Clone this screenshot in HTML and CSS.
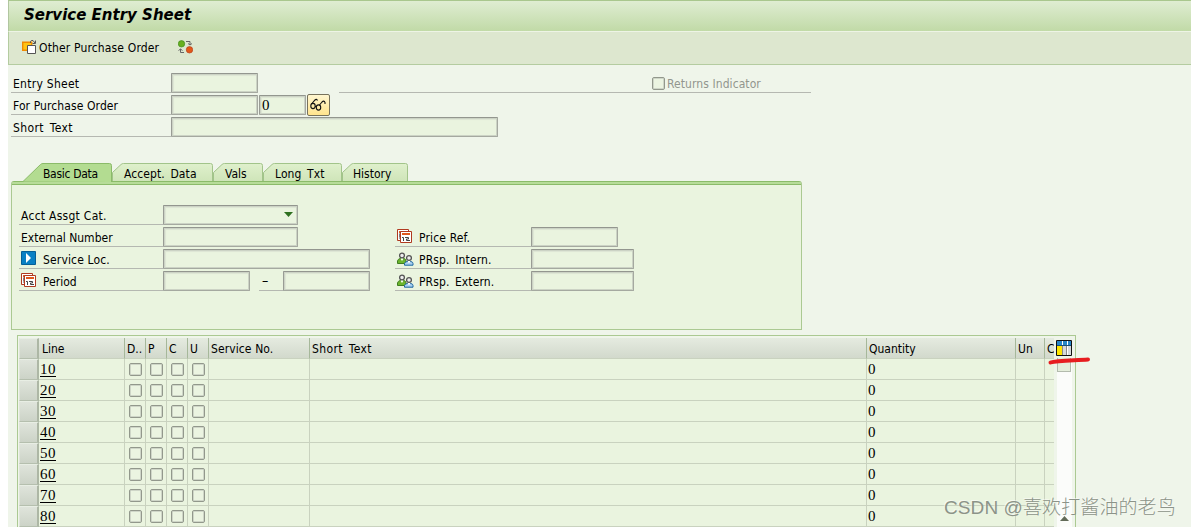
FILE: index.html
```html
<!DOCTYPE html>
<html lang="en">
<head>
<meta charset="utf-8">
<title>Service Entry Sheet</title>
<link rel="stylesheet" href="styles.css">
</head>
<body>
<svg class="defs" width="0" height="0">
  <symbol id="calendar" viewBox="0 0 16 14">
    <path d="M.5.5h11v11H.5z" fill="#fff" stroke="#b03a20"/><path d="M2 2h8v2H2z" fill="#e06020"/><path d="M2 5h1v5M2 7h2" stroke="#555" fill="none"/>
    <path d="M3.500 2.500h11v11h-11z" fill="#fff" stroke="#b03a20"/><path d="M5 4h8v2H5z" fill="#e0581c"/>
    <path d="M5 8.500h1.500V12M8 8.500h3.500v1.500H9.500V11.500H13" stroke="#444" fill="none"/>
  </symbol>
  <symbol id="people" viewBox="0 0 17 14">
    <path d="M.5 11.500V9Q1 7 3 6.500h4Q9 7 9 9v2.500z" fill="#6cb52d" stroke="#3f7d20"/>
    <circle cx="5" cy="3.500" r="2.400" fill="#eee" stroke="#555" stroke-width="1.300"/><path d="M3.500 6.500l1.500 2.500L6.500 6.500" fill="#fff"/>
    <path d="M7.500 13.200V11.500Q8 10 10 9.500h4Q16 10 16 11.500v1.700z" fill="#a9d0f0" stroke="#1c66a0"/>
    <circle cx="12" cy="6" r="2.400" fill="#eee" stroke="#555" stroke-width="1.300"/><path d="M10.500 9l1.500 2.500 1.500-2.500" fill="#fff"/>
  </symbol>
</svg>
<main class="app">
  <header class="titlebar"><h1>Service Entry Sheet</h1></header>
  <nav class="toolbar">
    <svg class="ic-order" width="15" height="16" viewBox="0 0 15 16"><path d="M.7 3.200h9v8.100H.7z" fill="#ffc414" stroke="#f08a00" stroke-width="1.400"/><path d="M5.500 6.500h8v8h-8z" fill="#fff" stroke="#555"/><path d="M8.500 4V2.500Q9 1 11 1.500l2 2.500M13.500 1.500v3H10.500" fill="none" stroke="#555"/></svg>
    <span class="t-order">Other Purchase Order</span>
    <svg class="ic-switch" width="15" height="14" viewBox="0 0 15 14"><circle cx="3.500" cy="3.800" r="3.200" fill="#68b01e" stroke="#438c20" stroke-width=".7"/><circle cx="11.500" cy="9.800" r="3.200" fill="#e2581a" stroke="#b8401a" stroke-width=".7"/><path d="M8 1.500h4V5M10 3.500l2 1.500 2-1.500M6 12.500H2.500V9M.5 10.500l2-1.500 2 1.500" fill="none" stroke="#666"/></svg>
  </nav>

  <section class="head-form">
    <div class="row"><label class="lab"><span class="t-entry">Entry Sheet</span></label><i class="field w87"></i>
      <div class="returns"><i class="check"></i><span class="t-returns">Returns Indicator</span></div></div>
    <div class="row"><label class="lab"><span class="t-for">For Purchase Order</span></label><i class="field w87"></i><i class="field w47 num">0</i>
      <button class="glasses"><svg width="18" height="14" viewBox="0 0 18 14"><path d="M2.500 6L6 2Q7.500.5 8.500 2.500M10.500 7L13 4Q15 2 16 4.500V6M6 8.500h1.500" fill="none" stroke="#111" stroke-width="1.100"/><ellipse cx="4" cy="8" rx="2.200" ry="2.600" fill="none" stroke="#111" stroke-width="1.100"/><ellipse cx="9.500" cy="9.500" rx="2.200" ry="2.600" fill="none" stroke="#111" stroke-width="1.100"/></svg></button></div>
    <div class="row"><label class="lab"><span class="t-short">Short Text</span></label><i class="field w327"></i></div>
  </section>

  <div class="tabs">
    <div class="tab active"><svg width="89" height="19" viewBox="0 0 89 19"><path d="M0 18.500L17.500 1.500Q18.500.5 20 .5H86.500Q88.500.5 88.500 2.500V19" fill="#b3dc91" stroke="#8bbb69"/></svg><span class="t-basic">Basic Data</span></div>
    <div class="tab tab-accept"><svg width="101" height="18" viewBox="0 0 101 18"><path d="M.5 18V9.500L9 1.500Q10 .5 11.500.5H98.500Q100.500.5 100.500 2.500V18" fill="url(#tabfill)" stroke="#a2c48a"/></svg><span class="t-accept">Accept. Data</span></div>
    <div class="tab tab-vals"><svg width="50" height="18" viewBox="0 0 50 18"><path d="M.5 18V9.500L9 1.500Q10 .5 11.500.5H47.500Q49.500.5 49.500 2.500V18" fill="url(#tabfill)" stroke="#a2c48a"/></svg><span class="t-vals">Vals</span></div>
    <div class="tab tab-long"><svg width="79" height="18" viewBox="0 0 79 18"><defs><linearGradient id="tabfill" x2="0" y2="1"><stop stop-color="#dff0cc"/><stop offset="1" stop-color="#cfe5b9"/></linearGradient></defs><path d="M.5 18V9.500L9 1.500Q10 .5 11.500.5H76.500Q78.500.5 78.500 2.500V18" fill="url(#tabfill)" stroke="#a2c48a"/></svg><span class="t-long">Long Txt</span></div>
    <div class="tab tab-history"><svg width="66" height="18" viewBox="0 0 66 18"><path d="M.5 18V9.500L9 1.500Q10 .5 11.500.5H63.500Q65.500.5 65.500 2.500V18" fill="url(#tabfill)" stroke="#a2c48a"/></svg><span class="t-history">History</span></div>
  </div>
  <section class="panel">
    <div class="col-left">
      <div class="row"><label class="lab"><span class="t-acct">Acct Assgt Cat.</span></label><i class="field w135 drop"><svg width="9" height="5" viewBox="0 0 9 5"><path d="M0 0h9L4.500 5z" fill="#2f7020"/></svg></i></div>
      <div class="row"><label class="lab"><span class="t-ext">External Number</span></label><i class="field w135"></i></div>
      <div class="row"><label class="lab"><svg class="lead lead-go" width="15" height="14" viewBox="0 0 15 14"><path d="M.5.5h14v13H.5z" fill="#0a80c4" stroke="#075f96"/><path d="M5 2l5 5-5 5z" fill="#fff"/></svg><span class="t-loc">Service Loc.</span></label><i class="field w207"></i></div>
      <div class="row"><label class="lab"><svg class="lead" width="16" height="14"><use href="#calendar"/></svg><span class="t-period">Period</span></label><i class="field w87"></i><span class="dash">–</span><i class="field w87"></i></div>
    </div>
    <div class="col-right">
      <div class="row"><label class="lab"><svg class="lead" width="16" height="14"><use href="#calendar"/></svg><span class="t-price">Price Ref.</span></label><i class="field w87"></i></div>
      <div class="row"><label class="lab"><svg class="lead people" width="17" height="14"><use href="#people"/></svg><span class="t-int">PRsp. Intern.</span></label><i class="field w103"></i></div>
      <div class="row"><label class="lab"><svg class="lead people" width="17" height="14"><use href="#people"/></svg><span class="t-extern">PRsp. Extern.</span></label><i class="field w103"></i></div>
    </div>
  </section>

  <section class="grid">
    <div class="sheet">
      <div class="line header"><b></b><span><em class="t-line">Line</em></span><span><em class="t-d">D..</em></span><span><em>P</em></span><span><em>C</em></span><span><em>U</em></span><span><em class="t-service">Service No.</em></span><span><em class="t-gshort">Short Text</em></span><span><em class="t-qty">Quantity</em></span><span><em class="t-un">Un</em></span><span><em>C</em></span></div>
      <div class="line"><b></b><span class="num"><u>10</u></span><span><i class="check"></i></span><span><i class="check"></i></span><span><i class="check"></i></span><span><i class="check"></i></span><span></span><span></span><span class="num">0</span><span></span><span></span></div>
      <div class="line"><b></b><span class="num"><u>20</u></span><span><i class="check"></i></span><span><i class="check"></i></span><span><i class="check"></i></span><span><i class="check"></i></span><span></span><span></span><span class="num">0</span><span></span><span></span></div>
      <div class="line"><b></b><span class="num"><u>30</u></span><span><i class="check"></i></span><span><i class="check"></i></span><span><i class="check"></i></span><span><i class="check"></i></span><span></span><span></span><span class="num">0</span><span></span><span></span></div>
      <div class="line"><b></b><span class="num"><u>40</u></span><span><i class="check"></i></span><span><i class="check"></i></span><span><i class="check"></i></span><span><i class="check"></i></span><span></span><span></span><span class="num">0</span><span></span><span></span></div>
      <div class="line"><b></b><span class="num"><u>50</u></span><span><i class="check"></i></span><span><i class="check"></i></span><span><i class="check"></i></span><span><i class="check"></i></span><span></span><span></span><span class="num">0</span><span></span><span></span></div>
      <div class="line"><b></b><span class="num"><u>60</u></span><span><i class="check"></i></span><span><i class="check"></i></span><span><i class="check"></i></span><span><i class="check"></i></span><span></span><span></span><span class="num">0</span><span></span><span></span></div>
      <div class="line"><b></b><span class="num"><u>70</u></span><span><i class="check"></i></span><span><i class="check"></i></span><span><i class="check"></i></span><span><i class="check"></i></span><span></span><span></span><span class="num">0</span><span></span><span></span></div>
      <div class="line"><b></b><span class="num"><u>80</u></span><span><i class="check"></i></span><span><i class="check"></i></span><span><i class="check"></i></span><span><i class="check"></i></span><span></span><span></span><span class="num">0</span><span></span><span></span></div>
    </div>
    <div class="scroll">
      <div class="config"><svg width="16" height="16" viewBox="0 0 16 16"><path d="M.5.5h15v15H.5z" fill="#fff" stroke="#111"/><path d="M1 1h14v4H1z" fill="#2586c8"/><path d="M1 5h5v10H1z" fill="#ffe600"/><path d="M7 6h3v9H7zM12 6h3v9h-3z" fill="#d5d9dc"/><path d="M1 5.500h14" stroke="#174f78"/><path d="M6.500 1v4M11.500 1v4" stroke="#fff"/><path d="M6.500 6v9M10.500 6v9" stroke="#888"/></svg></div>
      <div class="track"><div class="thumb"></div><svg width="9" height="5" viewBox="0 0 9 5"><path d="M0 5h9L4.500 0z" fill="#626b58"/></svg></div>
    </div>
  </section>
  <svg class="marker" width="44" height="10" viewBox="0 0 44 10"><path d="M3.500 6.500C10 4 28 4.500 41 3.500" fill="none" stroke="#e71d20" stroke-width="4" stroke-linecap="round"/></svg>
  <div class="watermark">CSDN @喜欢打酱油的老鸟</div>
</main>
</body>
</html>
```
FILE: styles.css
```css
* { box-sizing: border-box; }
body { margin: 0; width: 1191px; height: 527px; overflow: hidden; background: #fff; color: #000; font: 12px/16px "DejaVu Sans Condensed", "DejaVu Sans", sans-serif; font-stretch: condensed; }
i, em { font-style: normal; }
span { white-space: nowrap; }
svg { display: block; flex: none; }
.defs { position: absolute; }
.app { position: relative; margin-left: 8px; width: 1183px; height: 527px; background: #eff5ea; overflow: hidden; }
.titlebar { height: 31px; border-top: 1px solid #a9c78e; border-left: 1px solid #b1c6a0; background: linear-gradient(#dfedd2, #c1daa7); padding: 4px 0 0 15px; }
h1 { margin: 0; font: italic bold 15px/20px "DejaVu Sans", sans-serif; font-stretch: normal; white-space: nowrap; }
.toolbar { height: 34px; display: flex; background: #dde7cf; border: solid #b4cca0; border-width: 0 0 1px 1px; border-top: 1px solid #edf4e5; padding-left: 13px; }
.ic-order { margin: 7px 2px 0 0; }
.t-order { width: 139px; margin-top: 8px; letter-spacing: .15px; }
.ic-switch { margin-top: 8px; }
.head-form { padding: 6px 0 0 3px; height: 98px; }
.row { display: flex; height: 22px; align-items: flex-end; }
.lab { height: 22px; width: 160px; border-bottom: 1px solid #b5b8b1; padding: 5px 0 0 2px; display: flex; }
.field { height: 20px; border: 1px solid #a5a9a0; border-top-color: #93968f; border-left-color: #999c95; box-shadow: inset 0 0 0 1px #ccd3c5, inset 2px 2px 1px #dde5d4; background: #eaf4df; border-radius: 1px; flex: none; }
.w47 { width: 47px; margin-left: 1px; }
.w87 { width: 87px; }
.w103 { width: 103px; }
.w135 { width: 135px; }
.w207 { width: 207px; }
.w327 { width: 327px; }
.num { font: 15px/17px "Liberation Serif", serif; letter-spacing: .5px; }
.field.num { padding: 1px 0 0 2px; }
.check { display: block; width: 13px; height: 13px; border: 1px solid #92988c; border-radius: 2px; background: #ebf4e1; box-shadow: inset 0 0 0 1px #cfd6c8; flex: none; }
.returns { margin-left: 81px; width: 472px; height: 22px; padding: 5px 0 0 313px; display: flex; border-bottom: 1px solid #b5b8b1; color: #92968e; }
.returns .check { margin: 1px 2px 0 0; }
.glasses { width: 23px; height: 22px; margin: 0 0 -1px 1px; padding: 3px 1px; border: 1px solid #77725c; border-radius: 2px; background: linear-gradient(#fff6d0, #ffe48d); }
.t-entry { letter-spacing: .27px; }
.t-for { letter-spacing: .1px; }
.t-returns { letter-spacing: .08px; }
.t-short, .t-gshort { letter-spacing: .4px; word-spacing: 2px; }
.t-basic { letter-spacing: -.3px; }
.t-accept, .t-long { letter-spacing: .1px; word-spacing: 2px; }
.t-acct { letter-spacing: .27px; }
.t-loc, .t-price { letter-spacing: .15px; }
.t-int { letter-spacing: .15px; word-spacing: 2px; }
.t-extern { letter-spacing: .1px; word-spacing: 2px; }
.t-service { letter-spacing: .1px; }
.tabs { display: flex; height: 18px; padding-left: 15px; }
.tab { position: relative; height: 18px; flex: none; }
.tab svg { position: absolute; left: 0; top: 0; }
.tab span { position: relative; display: inline-block; margin-top: 3px; }
.active { width: 89px; padding-left: 20px; }
.tab-accept { width: 101px; padding-left: 12px; }
.tab-vals { width: 50px; padding-left: 12px; }
.tab-long { width: 79px; padding-left: 12px; }
.tab-history { width: 66px; padding-left: 11px; }
.panel { margin-left: 3px; width: 791px; height: 149px; border: 1px solid #abc992; border-top: 0; background: linear-gradient(#8bbb69 0 1px, #b7dc99 1px 3px, #8bbb69 3px 4px, #eaf4df 4px); border-radius: 3px 3px 0 0; display: flex; padding: 22px 0 0 7px; }
.panel .lab { width: 144px; padding-top: 5px; }
.col-left { width: 376px; }
.col-right { padding-top: 22px; }
.col-right .lab { width: 136px; }
.lead { margin: -1px 6px 0 0; }
.lead-go { margin-right: 7px; }
.people { margin: 0 5px 0 0; }
.drop { display: flex; justify-content: flex-end; padding: 6px 4px; }
.dash { width: 25px; height: 22px; margin: 0 0 0 9px; border-bottom: 1px solid #b5b8b1; padding: 3px 0 0 3px; font-size: 14px; }
.dash + .field { margin-left: -1px; }
.grid { margin: 5px 0 0 9px; width: 1059px; height: 200px; border: 1px solid #abc992; border-bottom: 0; display: flex; padding: 2px 0 0 1px; }
.sheet { width: 1035px; }
.line { display: grid; grid-template-columns: 20px 86px 21px 21px 21px 21px 101px 557px 149px 29px 9px; height: 21px; }
.line > * { border-right: 1px solid #c9d2bf; border-bottom: 1px solid #c9d2bf; background: #eaf4df; overflow: hidden; }
.line > :last-child { border-right: 0; }
.line b { border: 1px solid #b5bfae; border-left-color: #dfe5da; border-right-color: #adb7a5; border-top-color: #e8eee4; border-right-width: 2px; background: linear-gradient(#dfe4db, #ccd3c7); }
.header > * { background: linear-gradient(#e5ebe0, #d2d9cc); border-right-color: #a6b89a; }
.header em { display: block; padding: 3px 0 0 2px; }
.header .t-line { padding-left: 3px; }
.line .check { margin: 4px 0 0 4px; }
.line .num { padding: 2px 0 0 1px; }
u { text-underline-offset: 2px; text-decoration-thickness: 1px; }
.scroll { width: 20px; padding-left: 2px; }
.config { height: 20px; padding-top: 2px; }
.track { width: 15px; height: 180px; margin-left: 1px; background: #fbfcfa; position: relative; }
.thumb { width: 14px; height: 14px; border: 1px solid #b3bbad; border-top: 0; background: #e5eedb; }
.track svg { position: absolute; left: 3px; bottom: 17px; }
.marker { position: absolute; left: 1039px; top: 356px; }
.watermark { position: absolute; left: 936px; top: 494px; font: 300 19px/28px "Liberation Sans", "Noto Sans CJK SC", sans-serif; letter-spacing: .1px; color: #8c9388; text-shadow: -1px -1px 0 #fff8; white-space: nowrap; }
```
